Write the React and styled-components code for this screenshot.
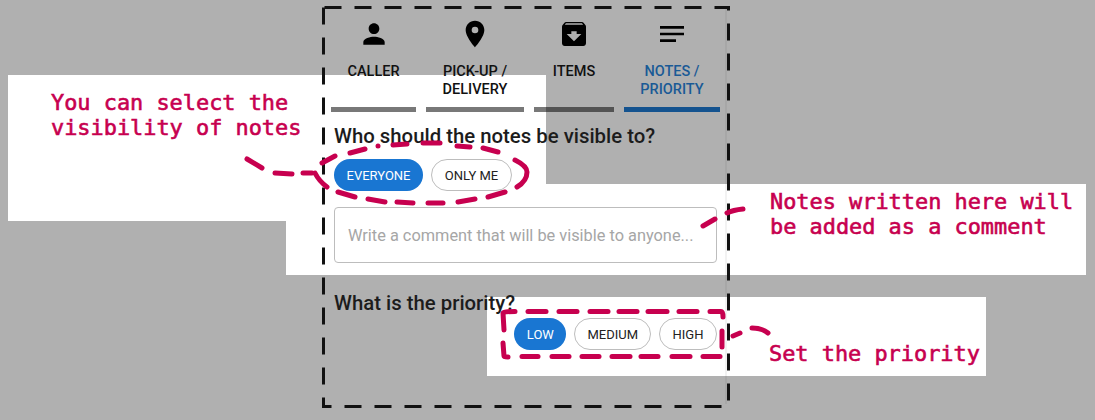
import React from "react";
import styled, { createGlobalStyle } from "styled-components";
import { MdPerson, MdPlace, MdArchive, MdNotes } from "react-icons/md";

const GlobalStyle = createGlobalStyle`
	html, body {
		margin: 0;
		padding: 0;
		background: #b0b0b0;
	}
`;

const Page = styled.div`
	position: relative;
	width: 1095px;
	height: 420px;
	overflow: hidden;
	padding: 8px 0 0 324px;
	box-sizing: border-box;
	background: #b0b0b0;
	font-family: Roboto, sans-serif;
`;

const Patch = styled.div`
	position: absolute;
	left: ${(p) => p.$x}px;
	top: ${(p) => p.$y}px;
	width: ${(p) => p.$w}px;
	height: ${(p) => p.$h}px;
	background: #fff;
`;

const Panel = styled.div`
	position: relative;
	box-sizing: border-box;
	width: 403px;
	height: 396px;
	padding: 0 5px 0 7px;
	border-right: 2px solid rgba(0, 0, 0, 0.05);
`;

const Tabs = styled.div`
	display: flex;
	gap: 10px;
`;

const Tab = styled.div`
	flex: none;
	width: ${(p) => p.$w}px;
	height: 104px;
	box-sizing: border-box;
	display: flex;
	flex-direction: column;
	align-items: center;
	padding-top: 10px;
	border-bottom: 5px solid ${(p) => (p.$active ? "#14538f" : "rgba(0, 0, 0, 0.53)")};
	color: ${(p) => (p.$active ? "#1a5a96" : "#111")};
	text-align: center;
	svg {
		color: #000;
		flex: none;
	}
`;

const TabLabel = styled.div`
	margin-top: 13px;
	font-size: 14.5px;
	font-weight: 500;
	line-height: 18px;
	white-space: nowrap;
`;

const Body = styled.div`
	padding: 0 3px;
`;

const Heading = styled.h2`
	margin: ${(p) => p.$top}px 0 0;
	font-size: 20.35px;
	font-weight: 500;
	line-height: 26px;
	color: #1c1c1c;
	white-space: nowrap;
`;

const Chips = styled.div`
	display: flex;
	gap: 8px;
	margin-top: ${(p) => p.$top}px;
	justify-content: ${(p) => (p.$right ? "flex-end" : "flex-start")};
`;

const Chip = styled.div`
	box-sizing: border-box;
	height: 32px;
	min-width: ${(p) => p.$min || 0}px;
	padding: 0 ${(p) => (p.$on ? "12.5px" : "12px")};
	display: flex;
	align-items: center;
	justify-content: center;
	border-radius: 16px;
	border: ${(p) => (p.$on ? "none" : "1px solid #bdbdbd")};
	background: ${(p) => (p.$on ? "#1976d2" : "transparent")};
	color: ${(p) => (p.$on ? "#fff" : "#222")};
	font-size: 13px;
`;

const CommentBox = styled.div`
	box-sizing: border-box;
	margin-top: 16px;
	height: 56px;
	padding: 0 13px;
	display: flex;
	align-items: center;
	border: 1px solid #bdbdbd;
	border-radius: 4px;
	background: #fff;
	color: #a6a6a6;
	font-size: 16.35px;
	white-space: nowrap;
`;

const Overlay = styled.svg`
	position: absolute;
	left: 0;
	top: 0;
	pointer-events: none;
`;

const Note = styled.div`
	position: absolute;
	left: ${(p) => p.$x}px;
	top: ${(p) => p.$y}px;
	font-family: "DejaVu Sans Mono", monospace;
	font-size: 21.9px;
	font-weight: 400;
	-webkit-text-stroke: 0.6px #c7004f;
	line-height: 25px;
	color: #c7004f;
	white-space: pre;
`;

const visibilityMarks = [
	"M247 159L262 168",
	"M275 173L292 174",
	"M303 173L312 173",
	"M315 173Q319 181 327 187",
	"M338 192L355 197",
	"M368 199L385 202",
	"M397 202L413 203",
	"M428 203L443 203",
	"M458 202L475 199",
	"M488 197L505 192",
	"M517 187Q527 181 527 172Q527 166 515 160",
	"M498 152L483 148",
	"M470 147L457 146",
	"M440 143L423 143",
	"M407 144L393 145",
	"M378 146L378 146",
	"M365 149L350 153",
	"M335 156L322 163",
];

const commentMarks = ["M703 226L715 219", "M727 213Q733 210 743 209"];

const priorityMarks = [
	"M504 330L503 313Q503 311.5 515 311.5",
	"M528 311.5L546 311.5",
	"M559 311.5L577 311.5",
	"M590 311.5L608 311.5",
	"M619 311.5L637 311.5",
	"M648 311.5L667 311.5",
	"M679 311.5L697 311.5",
	"M710 311.5L721 311.5Q723 311.5 723 317",
	"M722 331L722 347",
	"M720 356.5L703 356.5",
	"M690 356.5L672 356.5",
	"M658 356.5L641 356.5",
	"M630 356.5L612 356.5",
	"M599 356.5L582 356.5",
	"M569 356.5L552 356.5",
	"M538 356.5L522 356.5",
	"M503 343L504 356Q504 357 508 357",
	"M733 336L740 333",
	"M752 328Q762 328 768 333",
];

const App = () => {
	return (
		<Page>
			<GlobalStyle />
			<Patch $x={8} $y={75} $w={538} $h={146} />
			<Patch $x={286} $y={184} $w={800} $h={91} />
			<Patch $x={487} $y={297} $w={499} $h={79} />

			<Panel>
				<Tabs>
					<Tab $w={85}>
						<MdPerson size={32} />
						<TabLabel>CALLER</TabLabel>
					</Tab>
					<Tab $w={98}>
						<MdPlace size={32} />
						<TabLabel>
							PICK-UP /<br />
							DELIVERY
						</TabLabel>
					</Tab>
					<Tab $w={80}>
						<MdArchive size={32} />
						<TabLabel>ITEMS</TabLabel>
					</Tab>
					<Tab $w={96} $active>
						<MdNotes size={32} />
						<TabLabel>
							NOTES /<br />
							PRIORITY
						</TabLabel>
					</Tab>
				</Tabs>
				<Body>
					<Heading $top={11}>Who should the notes be visible to?</Heading>
					<Chips $top={10}>
						<Chip $on>EVERYONE</Chip>
						<Chip $min={81}>ONLY ME</Chip>
					</Chips>
					<CommentBox>Write a comment that will be visible to anyone...</CommentBox>
					<Heading $top={27}>What is the priority?</Heading>
					<Chips $top={2} $right>
						<Chip $on>LOW</Chip>
						<Chip>MEDIUM</Chip>
						<Chip $min={58}>HIGH</Chip>
					</Chips>
				</Body>
			</Panel>

			<Overlay width="1095" height="420" viewBox="0 0 1095 420" fill="none">
				<path
					d="M323.5 7.5V406.5H728.5V7.5H323.5"
					stroke="#111"
					strokeWidth="3"
					strokeDasharray="17 13"
				/>
				<g stroke="#c7004f" strokeWidth="5" strokeLinecap="round" strokeLinejoin="round">
					{[...visibilityMarks, ...commentMarks, ...priorityMarks].map((d) => (
						<path key={d} d={d} />
					))}
				</g>
			</Overlay>

			<Note $x={51} $y={90}>{"You can select the\nvisibility of notes"}</Note>
			<Note $x={770} $y={189}>{"Notes written here will\nbe added as a comment"}</Note>
			<Note $x={769} $y={341}>Set the priority</Note>
		</Page>
	);
};

export default App;
